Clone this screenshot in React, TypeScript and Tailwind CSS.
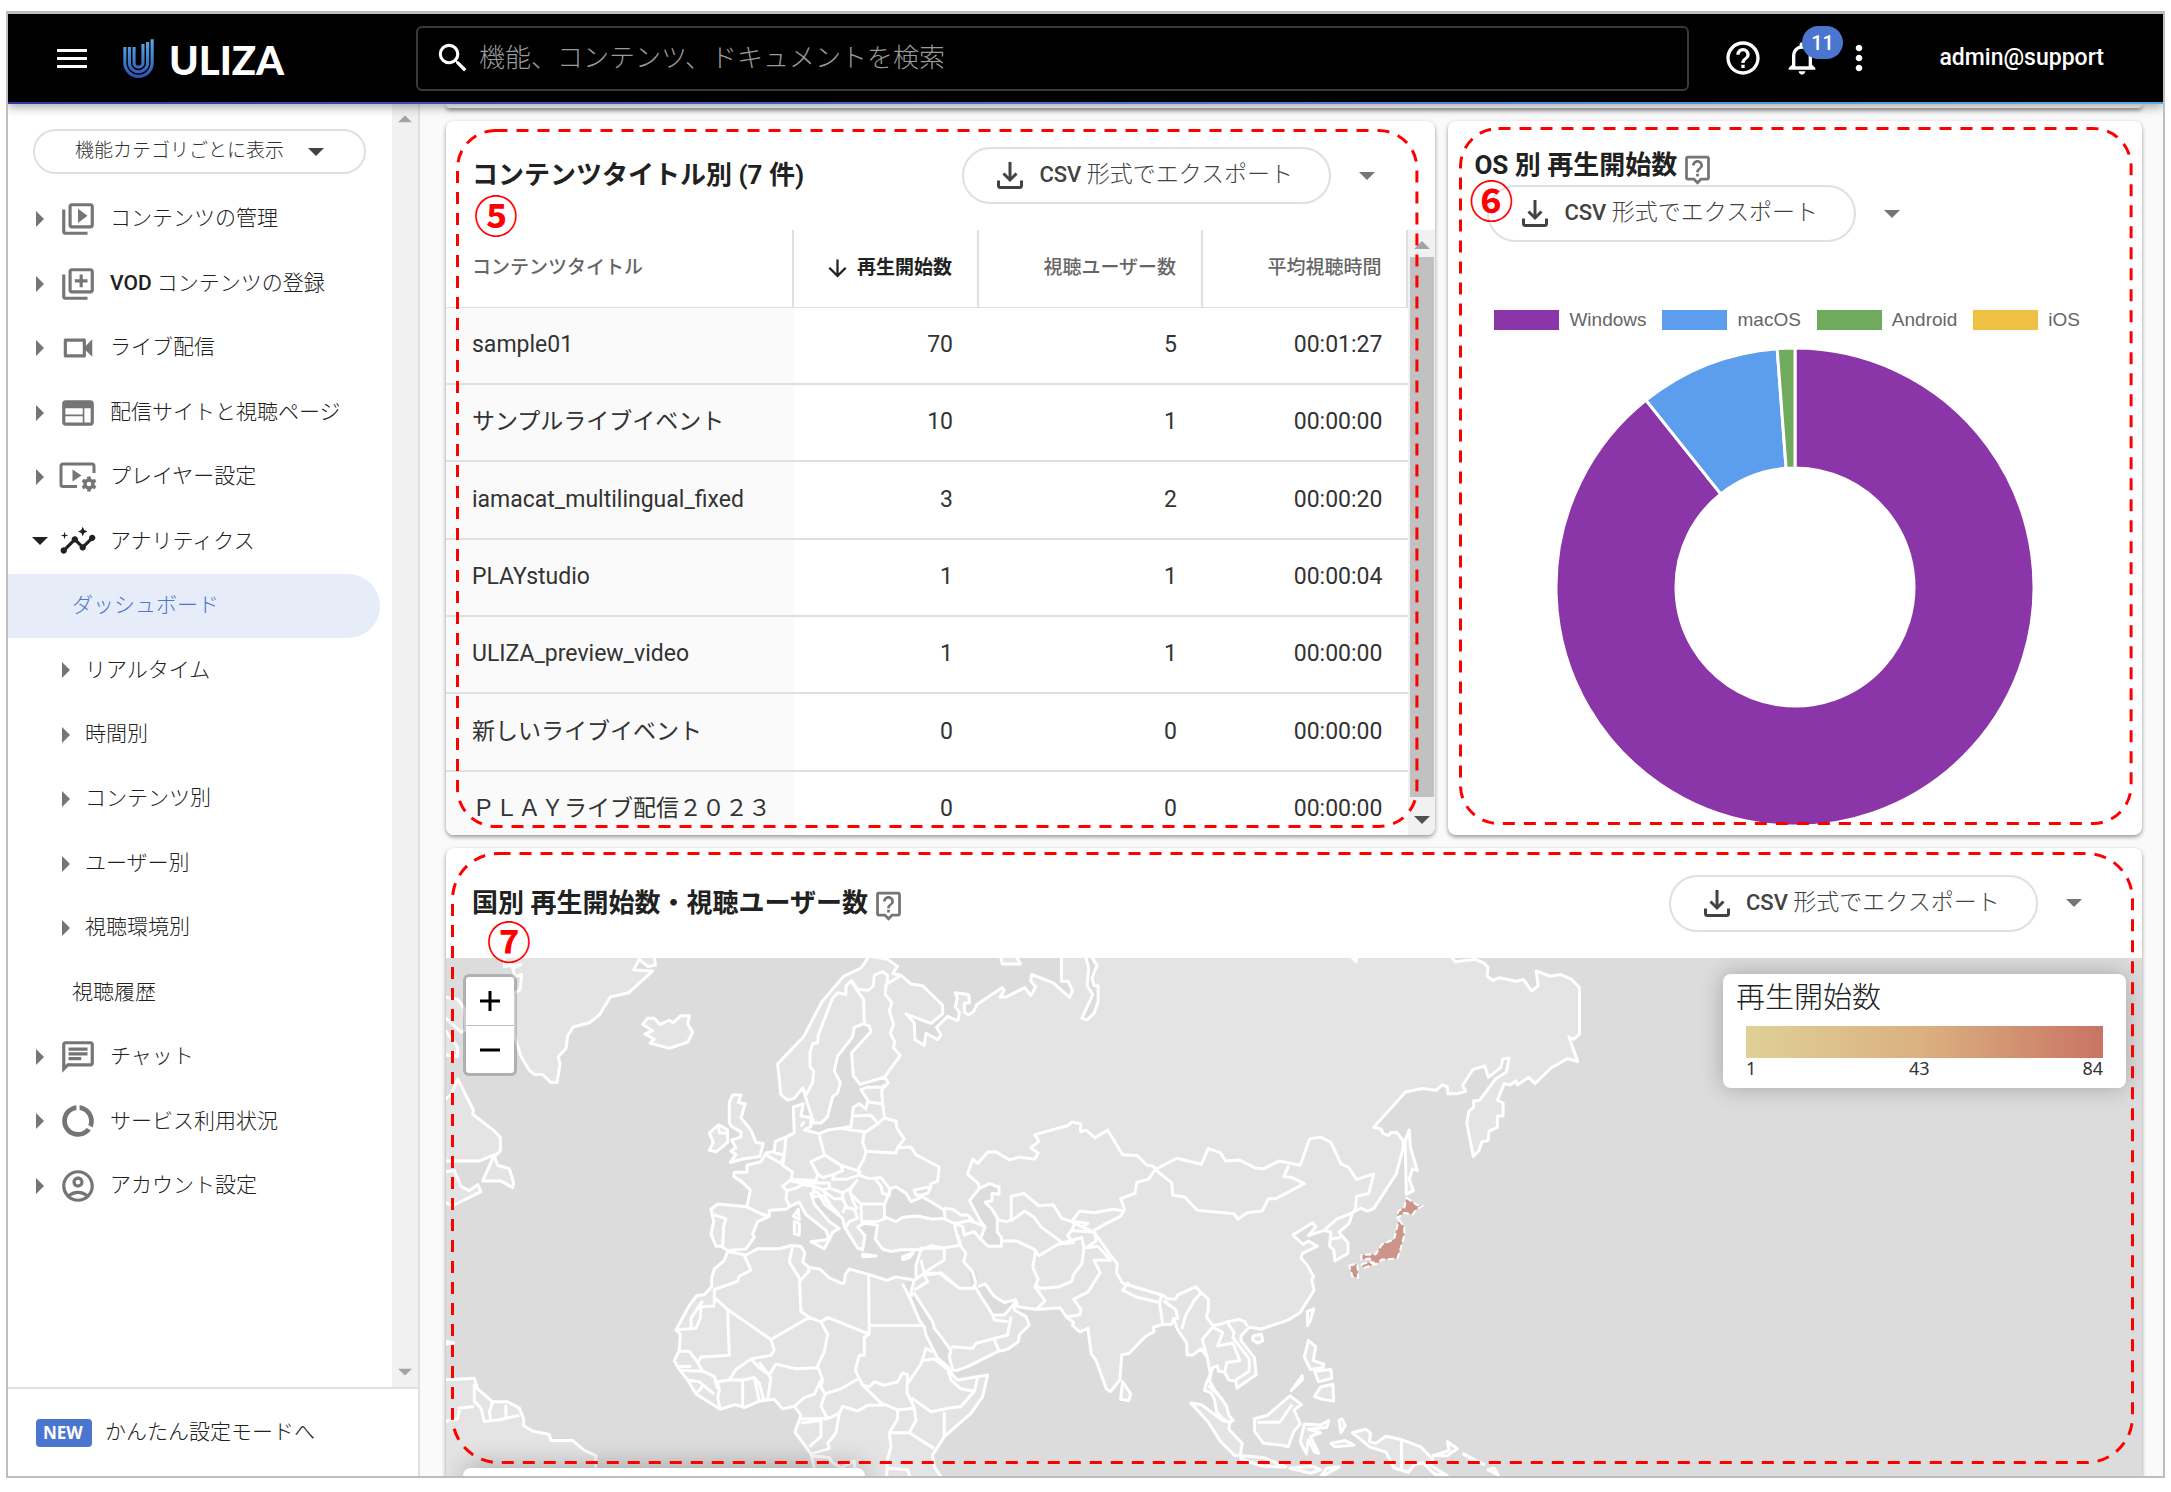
import type { ReactNode } from "react";
import {
  MdArrowDownward,
  MdDataUsage,
  MdHelpOutline,
  MdInsights,
  MdMoreVert,
  MdNotificationsNone,
  MdOutlineAccountCircle,
  MdOutlineChat,
  MdOutlineLibraryAdd,
  MdOutlineLiveHelp,
  MdOutlineVideoLibrary,
  MdOutlineVideocam,
  MdSearch,
  MdWeb,
} from "react-icons/md";

const LAND = "#e4e4e4";
const SEA = "#dcdcdc";

function PlayerSettingsIcon() {
  return (
    <svg viewBox="0 0 38 30" className="h-[30px] w-[38px]" fill="none" aria-hidden="true">
      <path d="M18 24.5H4a2 2 0 0 1-2-2V4a2 2 0 0 1 2-2h29a2 2 0 0 1 2 2v7" stroke="currentColor" strokeWidth="3" />
      <path d="M13.500 7.500v12l9-6z" fill="currentColor" />
      <circle cx="30" cy="22" r="4" stroke="currentColor" strokeWidth="3.400" />
      <g stroke="currentColor" strokeWidth="3.600">
        <path d="M30 14.500v3M30 26.500v3M23.500 18.200l2.600 1.500M33.900 24.300l2.600 1.500M23.500 25.800l2.600-1.500M33.900 19.700l2.600-1.500" />
      </g>
    </svg>
  );
}

function DownloadIcon() {
  return (
    <svg viewBox="0 0 26 27" className="h-[27px] w-[26px]" fill="none" stroke="currentColor" strokeWidth="3" aria-hidden="true">
      <path d="M13 0v17" />
      <path d="M6.500 11.500l6.500 6.500 6.500-6.500" />
      <path d="M1.500 18.500v5a2 2 0 0 0 2 2h19a2 2 0 0 0 2-2v-5" />
    </svg>
  );
}

function Triangle({ dir, className = "" }: { dir: "right" | "down" | "up"; className?: string }) {
  const shape = {
    right: { box: "0 0 8 16", d: "M0 0l8 8-8 8z", size: "h-4 w-2" },
    down: { box: "0 0 16 8", d: "M0 0h16l-8 8z", size: "h-2 w-4" },
    up: { box: "0 0 16 8", d: "M0 8h16l-8-8z", size: "h-2 w-4" },
  }[dir];
  return (
    <svg viewBox={shape.box} className={`shrink-0 ${shape.size} ${className}`} aria-hidden="true">
      <path d={shape.d} fill="currentColor" />
    </svg>
  );
}

function UlizaMark() {
  return (
    <svg viewBox="0 0 92 118" className="h-[39px] w-[31px]" fill="none" stroke="url(#uliza)" strokeWidth="9.500" aria-hidden="true">
      <defs>
        <linearGradient id="uliza" gradientUnits="userSpaceOnUse" x1="0" y1="0" x2="0" y2="118">
          <stop offset="0" stopColor="#5aaee6" />
          <stop offset="1" stopColor="#2f50b0" />
        </linearGradient>
      </defs>
      <path d="M4.750 24V71.750A41.250 41.500 0 0 0 87.250 71.750V1" />
      <path d="M18.500 24V71.750A27.500 27.500 0 0 0 73.500 71.750V9" />
      <path d="M32.500 24V71.750A13.500 13.500 0 0 0 59.500 71.750V15" />
    </svg>
  );
}

function Callout({ box, radius, mark, markAt }: { box: string; radius: number; mark: string; markAt: string }) {
  return (
    <>
      <div className={`pointer-events-none absolute z-20 ${box}`}>
        <svg className="size-full overflow-visible" fill="none" aria-hidden="true">
          <rect x="0.500" y="0.500" width="100%" height="100%" rx={radius} stroke="#ff0000" strokeWidth="3" strokeDasharray="12 9" />
        </svg>
      </div>
      <span className={`pointer-events-none absolute z-20 text-[44px] leading-[44px] font-bold text-[#ff0000] ${markAt}`}>{mark}</span>
    </>
  );
}

function ExportButton() {
  return (
    <div className="flex items-center gap-7">
      <button type="button" className="flex h-[57px] w-[369px] items-center gap-4 rounded-full border-2 border-[#e0e0e0] bg-white pl-[33px] text-[22px] font-medium whitespace-nowrap text-[#424242]">
        <DownloadIcon />
        <span>
          CSV <span className="text-[23px] font-light">形式でエクスポート</span>
        </span>
      </button>
      <button type="button" aria-label="エクスポート形式" className="text-[#757575]">
        <Triangle dir="down" />
      </button>
    </div>
  );
}

type NavItem = { label: ReactNode; icon?: ReactNode; kind: "top" | "sub" | "leaf"; open?: boolean; active?: boolean };

const NAV: NavItem[] = [
  { label: "コンテンツの管理", kind: "top", icon: <MdOutlineVideoLibrary size={38} /> },
  { label: <><span className="font-medium">VOD</span> コンテンツの登録</>, kind: "top", icon: <MdOutlineLibraryAdd size={38} /> },
  { label: "ライブ配信", kind: "top", icon: <MdOutlineVideocam size={38} /> },
  { label: "配信サイトと視聴ページ", kind: "top", icon: <MdWeb size={38} /> },
  { label: "プレイヤー設定", kind: "top", icon: <PlayerSettingsIcon /> },
  { label: "アナリティクス", kind: "top", icon: <MdInsights size={38} />, open: true },
  { label: "ダッシュボード", kind: "leaf", active: true },
  { label: "リアルタイム", kind: "sub" },
  { label: "時間別", kind: "sub" },
  { label: "コンテンツ別", kind: "sub" },
  { label: "ユーザー別", kind: "sub" },
  { label: "視聴環境別", kind: "sub" },
  { label: "視聴履歴", kind: "leaf" },
  { label: "チャット", kind: "top", icon: <MdOutlineChat size={38} /> },
  { label: "サービス利用状況", kind: "top", icon: <MdDataUsage size={38} /> },
  { label: "アカウント設定", kind: "top", icon: <MdOutlineAccountCircle size={38} /> },
];

function NavRow({ item }: { item: NavItem }) {
  if (item.kind === "leaf") {
    return (
      <a
        href="#"
        aria-current={item.active ? "page" : undefined}
        className={`flex w-[372px] items-center rounded-r-full pl-16 ${item.active ? "bg-[#e6ecf8] text-[#4a76cf]" : "text-[#212121]"}`}
      >
        {item.label}
      </a>
    );
  }
  if (item.kind === "sub") {
    return (
      <button type="button" className="flex items-center gap-[15px] pl-[54px] text-[#212121]">
        <Triangle dir="right" className="text-[#757575]" />
        {item.label}
      </button>
    );
  }
  return (
    <button type="button" className="flex items-center pl-6 whitespace-nowrap text-[#212121]">
      <span className={`flex w-4 justify-center ${item.open ? "text-[#212121]" : "text-[#757575]"}`}>
        <Triangle dir={item.open ? "down" : "right"} />
      </span>
      <span className={`ml-[11px] flex w-[38px] shrink-0 justify-center ${item.open ? "text-[#212121]" : "text-[#757575]"}`}>{item.icon}</span>
      <span className="ml-[13px]">{item.label}</span>
    </button>
  );
}

function Header() {
  return (
    <header className="relative z-30 shrink-0 bg-linear-to-r from-[#3533a8] via-[#4a6fd0] to-[#5aaee0] pb-[2px] shadow-[0_3px_10px_rgba(0,0,0,0.35)]">
      <div className="flex h-[88px] items-center bg-black text-white">
        <button type="button" aria-label="メニュー" className="ml-[49px] flex w-[30px] flex-col gap-[5px]">
          <span className="h-[3px] bg-white" />
          <span className="h-[3px] bg-white" />
          <span className="h-[3px] bg-white" />
        </button>
        <a href="#" className="ml-9 flex w-[293px] items-center gap-[15px]">
          <UlizaMark />
          <span className="pt-1 font-['Lato'] text-[40px] leading-10 font-black">ULIZA</span>
        </a>
        <label className="flex h-[65px] w-[1273px] items-center gap-[7px] rounded-md border-2 border-[#3a3a3a] pl-4">
          <MdSearch size={38} className="shrink-0" />
          <input
            type="search"
            aria-label="検索"
            placeholder="機能、コンテンツ、ドキュメントを検索"
            className="w-full bg-transparent text-[26px] font-light outline-none placeholder:text-[#9a9a9a]"
          />
        </label>
        <button type="button" aria-label="ヘルプ" className="ml-[34px]">
          <MdHelpOutline size={40} />
        </button>
        <button type="button" aria-label="通知 11件" className="relative ml-[19px]">
          <MdNotificationsNone size={40} />
          <span className="absolute -top-3 left-5 flex h-[33px] w-[41px] items-center justify-center rounded-full bg-[#4a76cf] text-[20px] font-medium">11</span>
        </button>
        <button type="button" aria-label="その他" className="ml-[17px]">
          <MdMoreVert size={40} />
        </button>
        <button type="button" className="mr-[59px] ml-auto text-[23px] font-medium">admin@support</button>
      </div>
    </header>
  );
}

function Sidebar() {
  return (
    <aside className="flex w-[412px] shrink-0 flex-col border-r-2 border-[#e0e0e0] bg-white">
      <div className="flex min-h-0 flex-1">
        <div className="flex-1">
          <div className="relative mt-[25px] ml-[25px] h-[45px] w-[333px]">
            <select aria-label="表示方法" className="size-full appearance-none rounded-full border-2 border-[#e0e0e0] bg-white pl-10 text-[19px] font-light text-[#303030]">
              <option>機能カテゴリごとに表示</option>
            </select>
            <Triangle dir="down" className="absolute top-[19px] right-[42px] text-[#424242]" />
          </div>
          <nav className="mt-[13px] grid h-[1031px] grid-rows-16 text-[21px] font-light">
            {NAV.map((item, i) => (
              <NavRow key={i} item={item} />
            ))}
          </nav>
        </div>
        <div className="flex w-[26px] flex-col items-center justify-between bg-[#f1f1f1] py-[11px] text-[#a3a3a3]">
          <Triangle dir="up" className="scale-90" />
          <Triangle dir="down" className="scale-90" />
        </div>
      </div>
      <div className="flex h-[89px] items-center gap-[13px] border-t-2 border-[#e0e0e0] pl-7 text-[21px] font-light text-[#212121]">
        <span className="flex h-7 w-14 items-center rounded-sm bg-[#4a76cf] pl-[7px] font-['Noto_Sans'] text-[17px] font-bold text-white">NEW</span>
        <a href="#">かんたん設定モードへ</a>
      </div>
    </aside>
  );
}

const ROWS: [string, string, string, string][] = [
  ["sample01", "70", "5", "00:01:27"],
  ["サンプルライブイベント", "10", "1", "00:00:00"],
  ["iamacat_multilingual_fixed", "3", "2", "00:00:20"],
  ["PLAYstudio", "1", "1", "00:00:04"],
  ["ULIZA_preview_video", "1", "1", "00:00:00"],
  ["新しいライブイベント", "0", "0", "00:00:00"],
  ["ＰＬＡＹライブ配信２０２３", "0", "0", "00:00:00"],
];

function ContentCard() {
  return (
    <section className="relative flex h-[714px] flex-col rounded-lg bg-white shadow-[0_2px_4px_rgba(0,0,0,0.4)]">
      <div className="flex h-[109px] shrink-0 items-center justify-between pr-[60px] pl-[26px]">
        <h2 className="text-[26px] font-bold text-[#212121]">コンテンツタイトル別 (7 件)</h2>
        <ExportButton />
      </div>
      <div className="flex min-h-0 flex-1 overflow-hidden rounded-b-lg">
        <div className="min-w-0 flex-1 overflow-hidden">
          <table className="w-full table-fixed border-separate border-spacing-0 text-[23px] text-[#333333]">
            <colgroup>
              <col className="w-[348px]" />
              <col className="w-[185px]" />
              <col className="w-[224px]" />
              <col />
            </colgroup>
            <thead>
              <tr className="h-[78px] text-[19px] text-[#666666] [&>th]:border-r-2 [&>th]:border-b [&>th]:border-[#e0e0e0]">
                <th className="pl-[26px] text-left font-medium">コンテンツタイトル</th>
                <th className="pr-[25px] text-[#212121]">
                  <span className="flex items-center justify-end gap-[6px]">
                    <MdArrowDownward size={27} />
                    再生開始数
                  </span>
                </th>
                <th className="pr-[25px] text-right font-medium">視聴ユーザー数</th>
                <th className="pr-[25px] text-right font-medium">平均視聴時間</th>
              </tr>
            </thead>
            <tbody>
              {ROWS.map(([title, plays, users, time]) => (
                <tr key={title} className="h-[77px] text-right nth-[3n]:h-[78px] [&>td]:border-b-2 [&>td]:border-[#e0e0e0]">
                  <td className="bg-[#fafafa] pl-[26px] text-left whitespace-nowrap">{title}</td>
                  <td className="pr-[26px]">{plays}</td>
                  <td className="pr-[26px]">{users}</td>
                  <td className="pr-[26px]">{time}</td>
                </tr>
              ))}
            </tbody>
          </table>
        </div>
        <div className="flex w-[27px] flex-col items-center bg-[#f1f1f1] pt-[11px] pb-[11px]">
          <Triangle dir="up" className="text-[#a3a3a3]" />
          <div className="mt-2 mb-[19px] w-6 flex-1 bg-[#c1c1c1]" />
          <Triangle dir="down" className="text-[#505050]" />
        </div>
      </div>
      <Callout box="top-[9px] right-[19px] bottom-[9px] left-[11px]" radius={38} mark="⑤" markAt="top-[75px] left-7" />
    </section>
  );
}

const LEGEND = [
  { label: "Windows", swatch: "bg-[#8a36a8]" },
  { label: "macOS", swatch: "bg-[#5c9eed]" },
  { label: "Android", swatch: "bg-[#70aa5c]" },
  { label: "iOS", swatch: "bg-[#eec144]" },
];

const SLICES = [
  { value: 75, color: "#8a36a8" },
  { value: 8, color: "#5c9eed" },
  { value: 1, color: "#70aa5c" },
];

function Donut() {
  const total = SLICES.reduce((sum, s) => sum + s.value, 0);
  const at = (turn: number, r: number) => `${237 + r * Math.sin(turn * 2 * Math.PI)} ${237 - r * Math.cos(turn * 2 * Math.PI)}`;
  let start = 0;
  return (
    <svg viewBox="0 0 474 474" className="mx-auto mt-5 size-[474px] overflow-visible" role="img" aria-label="OS 別 再生開始数">
      {SLICES.map((s) => {
        const from = start;
        const to = start + s.value / total;
        start = to;
        const large = to - from > 0.5 ? 1 : 0;
        return (
          <path
            key={s.color}
            d={`M${at(from, 239)}A239 239 0 ${large} 1 ${at(to, 239)}L${at(to, 119)}A119 119 0 ${large} 0 ${at(from, 119)}Z`}
            fill={s.color}
            stroke="#ffffff"
            strokeWidth="3"
          />
        );
      })}
    </svg>
  );
}

function OsCard() {
  return (
    <section className="relative flex h-[714px] flex-col rounded-lg bg-white shadow-[0_2px_4px_rgba(0,0,0,0.4)]">
      <div className="mt-7 flex h-8 items-center gap-1 pl-[26px]">
        <h2 className="text-[26px] leading-8 font-bold whitespace-nowrap text-[#212121]">OS 別 再生開始数</h2>
        <MdOutlineLiveHelp size={33} className="mt-2 text-[#757575]" />
      </div>
      <div className="mt-1 pl-[39px]">
        <ExportButton />
      </div>
      <ul className="mt-[68px] flex h-5 items-center gap-4 pl-[46px] font-['Liberation_Sans'] text-[19px] text-[#666666]">
        {LEGEND.map((l) => (
          <li key={l.label} className="flex items-center gap-[10px]">
            <span className={`h-5 w-[65px] ${l.swatch}`} />
            {l.label}
          </li>
        ))}
      </ul>
      <Donut />
      <Callout box="top-[7px] right-[11px] bottom-3 left-3" radius={38} mark="⑥" markAt="top-[60px] left-[21px]" />
    </section>
  );
}

/* Coastlines and borders, grouped by the three sheets they were digitised on. */
const WEST_COASTS = [
  "M190 40L190 75 240 70 215 80 222 105 242 98 237 142 220 150 220 270 240 330 265 370 280 382 305 382 330 405 348 405 357 352 352 332 375 308 380 272 397 247 445 235 475 213 508 162 563 150 635 88 578 85 595 55 620 75 643 72 640 40z",
  "M605 240L620 222 640 222 657 240 685 228 697 235 720 215 745 215 740 238 755 262 740 290 685 308 627 293 640 282 612 267 635 258z",
  "M1590 1015L1560 995 1500 945 1440 960 1425 955 1425 925 1440 880 1380 880 1350 885 1325 878 1303 850 1310 810 1270 805 1250 815 1272 840 1265 880 1250 875 1210 815 1205 790 1150 750 1130 715 1110 720 1120 750 1165 800 1195 820 1175 830 1165 850 1155 825 1095 780 1075 745 1050 755 1035 765 985 768 985 785 950 800 935 835 940 845 915 878 860 882 840 870 825 870 810 835 818 800 810 765 830 750 918 758 928 710 900 685 878 672 880 660 918 660 918 640 960 630 975 605 1000 600 1003 572 1035 560 1060 548 1057 475 1087 465 1080 500 1110 505 1110 530 1090 540 1135 550 1160 540 1200 535 1230 530 1237 475 1255 465 1275 480 1280 455 1260 425 1280 418 1330 418 1342 405 1330 390 1257 410 1237 385 1232 320 1290 260 1285 245 1268 238 1240 248 1235 275 1190 330 1180 372 1198 405 1190 435 1175 445 1160 502 1140 520 1118 520 1085 420 1060 450 1040 455 1020 440 1010 352 1088 275 1143 175 1208 103 1260 80 1285 45 1340 55 1370 75 1355 95 1380 100 1410 125 1445 130 1505 185 1505 210 1470 237 1395 210 1420 235 1422 283 1450 300 1455 265 1490 283 1500 270 1487 248 1520 217 1552 230",
  "M1415 965L1365 957 1338 967 1283 950 1225 935 1213 950 1210 975 1200 975 1165 960 1137 935 1105 930 1085 915 1092 890 1080 870 1050 868 1015 877 950 877 915 895 860 885 850 910 820 935 812 960 812 985 790 1008 768 1010 745 1038 705 1108 718 1120 715 1165 700 1195 715 1220 740 1250 765 1290 838 1333 882 1320 912 1328 955 1310 1000 1305 1025 1332 1060 1325 1080 1350 1062 1398 1110 1460 1120 1500 1140 1600 1500 1600 1500 1525 1480 1496 1475 1463 1510 1411 1590 1345 1625 1297 1640 1236 1550 1250 1535 1236 1520 1212 1490 1188 1455 1122 1450 1099 1435 1080 1412 1027 1385 977M1410 1013L1425 985 1415 965",
  "M875 440L900 440 892 462 913 465 900 505 930 540 945 575 967 578 957 615 905 622 868 632 885 610 870 600 885 590 872 568 900 560 900 545 872 530 865 520 865 462z",
  "M833 525L860 540 860 575 825 602 805 597 817 575 805 548z",
  "M1110 857L1165 850 1150 877z",
  "M1060 800L1075 805 1075 838 1060 835z",
  "M1072 765L1075 795 1057 785z",
  "M1265 892L1305 898 1265 900z",
  "M1385 900L1417 888 1405 903 1385 908z",
  "M0 160L50 168 70 195 75 255 60 262 0 210",
  "M0 240L50 305 50 330 0 325",
  "M0 460L30 440 50 395 97 483 95 495 157 540 178 560 178 600 160 615 170 640 205 650 218 690 215 703 180 685 125 685 160 610 115 628 0 628",
  "M0 660L40 655 60 700 85 712 110 695 120 715 35 755 0 740",
  "M0 1250L100 1245 110 1275 155 1312 200 1312 235 1330 248 1360 248 1380 275 1395 325 1405 330 1422 395 1422 430 1450 465 1465 460 1600 0 1600",
  "M0 1138L38 1145 0 1150z",
];

const WEST_BORDERS =
  "M1085 420L1095 440 1115 405 1118 372 1107 360 1107 320 1115 295 1130 292 1132 270 1175 165 1190 150 1215 155 1215 130 1232 115 1250 140 1282 143 1297 130 1300 100 1325 90 1340 100 1338 125 1380 100M1232 120L1268 170 1270 238M1335 125L1333 155 1353 178 1345 200 1358 240 1348 265 1362 290 1357 305 1378 328 1330 390M1330 410L1322 430 1325 465 1280 460M1325 465L1330 500M1235 500L1290 498 1310 520M1200 535L1230 540 1275 545 1310 522 1330 505 1365 515 1368 535 1390 565 1370 590 1365 605 1275 600 1265 575 1270 545M1370 590L1410 588 1425 610 1495 645 1490 685 1465 695M1135 555L1150 610 1200 640 1250 655 1270 620 1275 600M1035 560L1030 610 1025 640 1055 660 1050 680 1125 683 1130 665 1110 630 1150 612M975 610L1020 635 1030 612M1000 605L1030 610M1048 682L1025 700 1038 712 1035 735 1045 755M1050 685L1070 688 1085 695 1065 705 1040 712M1070 690L1165 690 1165 705 1145 710 1120 700 1085 695M1130 665L1145 675 1180 665 1205 655 1200 640M1180 668L1175 680 1215 680 1255 668 1258 655M1165 705L1205 718 1230 705 1250 680M1230 705L1228 720 1260 750 1335 750M1250 655L1255 668 1285 678 1320 675 1345 705 1345 725 1325 720 1320 700 1300 675M1120 700L1115 730 1150 725 1165 745 1150 735 1195 780M1145 712L1180 735 1205 735 1205 718M1205 735L1215 755 1205 775M1228 720L1240 750 1250 765M1260 750L1262 800 1310 800 1335 790M1215 760L1240 765 1250 790 1225 800 1215 815M818 780L855 792 848 815 845 870M918 758L965 780 985 785M1440 880L1470 868 1505 875 1555 868M833 530L835 548 858 548M1090 515L1080 530M910 895L930 938 895 955 890 970 820 993 820 1035M822 1040L780 1042 778 1075 765 1103 705 1108M785 1025L750 1075 750 1100M820 1015L860 1050 865 1180 780 1185 770 1200 745 1168 715 1168M860 1050L990 1135 1105 1072 1080 1055 1075 960 1045 915 1055 868M1075 970L1105 940 1100 925M1283 950L1285 1120 1160 1072 1140 1085 1105 1072M1285 1095L1447 1095M1285 1120L1270 1128 1270 1180 1255 1180 1243 1222 1265 1265 1320 1315 1370 1335 1370 1360 1345 1400 1350 1440 1340 1475 1335 1560M1140 1085L1160 1120 1150 1170 1130 1210 1145 1250 1140 1270 1155 1295M1130 1215L1065 1218 1005 1205 985 1235M990 1135L1000 1165 990 1180 930 1190 885 1220 865 1250 830 1255 835 1280 830 1300 838 1333M770 1200L785 1225 820 1240 830 1275M785 1225L715 1222M712 1212L750 1212M740 1250L775 1255 800 1275 820 1290M765 1290L790 1262M865 1250L905 1250 905 1325M905 1250L940 1243 955 1310M940 1243L955 1260 968 1305M955 1200L990 1245 980 1305M930 1190L955 1215 985 1235M1060 1325L1090 1300 1120 1290 1140 1250M1150 1295L1140 1325 1160 1360 1080 1360M1150 1290L1200 1275 1255 1245M1160 1360L1195 1345 1205 1325 1250 1338 1280 1322 1330 1322M1080 1372L1140 1365 1140 1410 1105 1440M1195 1345L1185 1400 1160 1430 1165 1445 1110 1460M1370 1335L1420 1330 1425 1365 1405 1400 1350 1400M1405 1400L1480 1445M1410 1300L1470 1340 1520 1330M1510 1340L1510 1411M1265 1265L1285 1270 1300 1255 1330 1265 1370 1255 1385 1230 1400 1235 1398 1285 1420 1330M1400 1260L1440 1205 1455 1160 1475 1170M1440 1195L1480 1190 1520 1220 1530 1250 1560 1275 1600 1282 1560 1325 1520 1330M1600 1282L1610 1245M1110 1465L1165 1470 1175 1485 1200 1500 1240 1480 1245 1560M1335 1500L1400 1505 1420 1560M100 1260L100 1310 120 1330 130 1368 180 1362 235 1350M155 1312L145 1340 150 1365M195 1320L195 1355M50 1330L100 1325M0 1370L50 1360 55 1335";

const EAST_COASTS = [
  "M42 230L45 205 35 190 40 165 35 150 68 155 70 178 57 180 58 205 67 213 80 203 88 183 150 135 155 143 145 162 160 162 205 135 220 158 232 133 220 117 222 98 275 122 315 163 322 145 312 117 295 117 295 0 355 0 355 50 362 80 358 130 372 155 345 222 358 227 375 208 385 175 385 130 375 130 370 108 382 72 370 50 370 0 1252 0 1252 50 1260 62 1310 55 1330 65 1340 78 1338 103 1352 115 1368 107 1408 117 1427 112 1447 145 1463 130 1458 88 1493 103 1518 98 1545 112 1564 135 1564 268 1550 282 1538 275 1560 345 1535 337 1495 363 1455 408 1440 390 1412 412 1408 400 1395 412 1380 408 1363 455 1377 463 1377 500 1363 500 1363 533 1343 542 1340 570 1325 573 1318 598 1304 615 1288 520 1293 487 1305 475 1305 457 1320 455 1358 395 1385 375 1392 335 1376 338 1372 362 1341 390 1332 358 1303 368 1278 413 1285 430 1263 437 1242 437 1240 417 1227 412 1214 427 1178 422 1138 432 1060 532 1078 537 1083 550 1097 555 1102 547 1117 547 1132 570 1132 592 1115 665 1060 763 1045 770 1028 762 1008 775 1000 805 975 830 997 860 997 890 965 912 962 880 952 870 955 830 938 825 900 840 918 815 910 803 862 838 887 865 900 855 922 870 885 890 882 903 898 925 913 957 908 965 914 995 880 1058 850 1080 785 1105 755 1100 735 1125 735 1138 768 1187 772 1235 725 1273 722 1253 705 1250 695 1228 680 1225 677 1210 665 1215 658 1252 668 1275 685 1300 700 1325 705 1350 716 1365 708 1370 690 1360 675 1340 670 1305 660 1285 646 1280 648 1265 660 1232 652 1185 637 1162 615 1180 603 1178 602 1145 580 1108 570 1075 565 1092 543 1092 520 1100 522 1113 500 1127 460 1175 443 1178 438 1250 415 1283 405 1275 380 1195 368 1175 360 1103 340 1113 322 1095 325 1087 308 1072 292 1045 235 1050 188 1042 183 1022 155 1030 130 1012 108 977 90 985",
  "M1147 540L1150 590 1167 655 1155 650 1147 680 1157 712 1140 722 1137 570z",
  "M898 1055L913 1048 905 1080 898 1095z",
  "M765 1125L785 1120 788 1138 775 1145 763 1135z",
  "M445 1255L465 1290 460 1308 440 1305z",
  "M612 1315L638 1320 690 1365 708 1370 705 1390 738 1430 733 1465 720 1465 685 1425 655 1370z",
  "M735 1465L790 1470 845 1497 790 1495 735 1475z",
  "M855 1295L883 1320 865 1335 880 1375 865 1395 850 1440 835 1435 790 1430 768 1395 768 1360 800 1350z",
  "M885 1400L890 1375 930 1378 950 1365 945 1385 900 1390 930 1400 905 1410 925 1458 915 1455 900 1420 895 1460 880 1425z",
  "M900 1138L918 1155 912 1195 938 1205 935 1215 905 1220 890 1185z",
  "M915 1225L955 1220 958 1245 925 1255z",
  "M960 1262L962 1310 935 1305 915 1297 930 1270z",
  "M885 1238L885 1250 858 1280z",
  "M1008 1400L1040 1390 1052 1400 1050 1425 1065 1430 1090 1410 1130 1420 1175 1440 1205 1475 1190 1485 1240 1522 1210 1518 1180 1485 1160 1490 1145 1512 1110 1500 1090 1455 1050 1440 1035 1425z",
  "M1240 1425L1265 1445 1240 1465 1205 1465 1245 1450z",
  "M1280 1460L1300 1475 1330 1490z",
  "M1340 1505L1355 1500 1365 1520z",
  "M975 1365L982 1360 990 1380 980 1400z",
  "M955 1430L990 1422 1012 1435 965 1440z",
  "M855 1500L910 1495 930 1505 905 1515z",
  "M975 1497L940 1520 930 1525 945 1500z",
  "M145 40L150 68 195 68 180 40z",
  "M1000 40L1017 62 1020 40z",
];

const CASPIAN = "M135 700L120 692 95 705 70 740 95 795 108 815 97 848 115 870 148 870 148 845 138 830 138 790 125 765 108 745 125 740 125 720 142 722 142 700z";

const EAST_BORDERS =
  "M95 705L90 690 65 665 78 622 90 635 115 602 135 602 168 625 190 617 230 622 238 605 220 590 240 572 230 553 312 527 320 517 342 522 342 545 355 540 378 562 408 540 445 610 480 612 505 640 520 642 525 652 578 620 638 637 655 592 685 605 697 628 732 625 770 648 790 650 828 628 880 640 903 565 930 560 955 575 980 637 998 645 1018 680 1060 665 1048 720 1018 728 1015 765 1008 775 970 792 938 825M525 652L565 690 568 725 597 730 628 768 718 778 727 793 750 775 787 770 802 735 820 735 890 692 860 675 840 672 852 640M525 652L508 680 480 688 475 720 440 735 450 765 440 785 405 805 375 825M138 795L160 800 172 795 172 728 203 720 240 755 275 752 295 790 320 800 340 770 375 775 420 765 450 770M172 798L205 770 230 790 245 815 300 862 285 865 240 897 230 880 185 855 150 855M320 800L345 815 375 830 320 825 330 800 360 805 345 815M300 862L325 860 310 840 320 825M375 830L380 855 355 875M285 865L345 845 350 875 385 870M350 875L345 920 325 950 320 970 290 985 245 990 230 980M232 880L225 930 238 965 230 985 255 1025 235 1048M385 870L415 910 375 910 390 945 360 1000 325 1020 343 1050 340 1065 308 1070M375 830L415 895 432 920 430 945 445 975 545 1010 555 1020 575 1020 580 1008 625 985 637 1002 655 1020 655 1050 650 1070 665 1095 690 1090 700 1085 730 1078 745 1085 750 1098M460 972L445 995 480 1015 535 1030 540 1012M535 1030L540 1065 543 1092M545 1025L575 1050 580 1075 568 1075M637 1002L620 1025 600 1065 590 1105M665 1100L640 1135 652 1185M665 1100L690 1115 678 1153 715 1145 732 1195 700 1200 695 1228M700 1085L718 1115 715 1130 755 1190 755 1225 722 1250M655 1265L690 1305M952 850L980 845M775 1370L830 1370 860 1320M1128 1420L1128 1505";

const JAPAN =
  "M1140 732L1165 752 1180 755 1165 765 1155 780 1135 775 1118 790 1120 770 1135 760zM1122 795L1135 815 1135 840 1125 880 1118 905 1080 908 1065 922 1050 905 1030 908 1030 895 1065 893 1080 865 1110 850 1115 825zM1000 925L1020 920 1022 960 1008 957zM1030 922L1050 914 1060 922 1035 932z";

const ARABIA =
  "M400 600L388 645 400 640 455 725 460 745 480 770 510 812 505 830 515 870 525 872 560 860 650 815 680 808 712 785 715 765 745 735 735 710 700 690 705 665 670 705 635 705 620 680 600 650 585 625 535 625 475 580 430 580z";

const MIDDLE_SEAS = [
  "M310 410L310 375 330 325 345 320 375 340 390 365 425 350 490 390 492 415 455 418 410 408 365 412 345 425z",
  "M400 330L450 320 440 340 420 345 405 345z",
];

const MIDDLE_BORDERS =
  "M492 418L520 430 525 455 535 490M415 505L490 505 490 540 450 565 430 580 420 540M400 630L440 605 430 585 480 580M530 465L540 500 555 520 548 545 575 575 585 610M575 625L585 610M490 385L515 388 540 405 560 405 575 420 550 425 520 430 545 440 550 465 580 455 600 480M560 420L590 430 610 440M510 800L575 805 585 790 680 765 690 710M640 780L655 815M635 705L640 720 680 725";

function WorldMap() {
  const west = "translate(-5 -18) scale(.3333 .352)";
  const east = "translate(495 -18) scale(.4082 .352)";
  const middle = "translate(335 122) scale(.3333)";
  return (
    <svg
      className="absolute top-0 left-0 h-[540px] w-[1697px] [&_path]:[vector-effect:non-scaling-stroke]"
      viewBox="0 0 1697 540"
      fill={LAND}
      stroke="#ffffff"
      strokeWidth="3"
      strokeLinejoin="round"
      role="img"
      aria-label="国別の再生開始数の地図"
    >
      <g transform={west}>
        {WEST_COASTS.map((d) => (
          <path key={d} d={d} />
        ))}
      </g>
      <g transform={east}>
        {EAST_COASTS.map((d) => (
          <path key={d} d={d} />
        ))}
        <path d="M32 250V940H110V250z" stroke="none" />
      </g>
      <g transform={middle}>
        <path d={ARABIA} />
        {MIDDLE_SEAS.map((d) => (
          <path key={d} d={d} fill={SEA} />
        ))}
      </g>
      <g transform={east}>
        <path d={CASPIAN} fill={SEA} />
        <path d={JAPAN} fill="#cd9488" strokeDasharray="6 3" strokeWidth="2" />
      </g>
      <g fill="none">
        <path transform={west} d={WEST_BORDERS} />
        <path transform={east} d={EAST_BORDERS} />
        <path transform={middle} d={MIDDLE_BORDERS} />
      </g>
    </svg>
  );
}

function CountryCard() {
  return (
    <section className="relative flex min-h-0 flex-1 flex-col rounded-t-lg bg-white shadow-[0_2px_4px_rgba(0,0,0,0.4)]">
      <div className="flex h-[110px] shrink-0 items-center justify-between pr-[60px] pl-[26px]">
        <div className="flex items-center gap-1">
          <h2 className="text-[26px] font-bold text-[#212121]">国別 再生開始数・視聴ユーザー数</h2>
          <MdOutlineLiveHelp size={33} className="mt-1 text-[#757575]" />
        </div>
        <ExportButton />
      </div>
      <div className="relative flex-1 overflow-hidden bg-[#dcdcdc]">
        <WorldMap />
        <div className="absolute top-4 left-[17px] flex w-[54px] flex-col rounded-md border-[3px] border-black/20 bg-white bg-clip-padding text-[#000000]">
          {[
            { label: "拡大", d: "M0 10h20M10 0v20" },
            { label: "縮小", d: "M0 10h20" },
          ].map((z, i) => (
            <button key={z.label} type="button" aria-label={z.label} className={`flex h-12 items-center justify-center ${i ? "border-t border-[#c0c0c0]" : ""}`}>
              <svg viewBox="0 0 20 20" className="size-5" stroke="currentColor" strokeWidth="3" aria-hidden="true">
                <path d={z.d} />
              </svg>
            </button>
          ))}
        </div>
        <div className="absolute top-4 right-4 w-[403px] rounded-lg bg-white px-[13px] pt-1 pb-[10px] shadow-[0_0_22px_rgba(0,0,0,0.25)]">
          <h3 className="text-[29px] leading-10 font-light text-[#212121]">再生開始数</h3>
          <div className="mx-[10px] mt-2 h-8 bg-linear-to-r from-[#e0d098] via-[#dab080] to-[#c87464]" />
          <div className="mx-[10px] flex justify-between font-['Noto_Sans'] text-[18px] leading-5 text-[#333333]">
            <span>1</span>
            <span>43</span>
            <span>84</span>
          </div>
        </div>
        <div className="absolute -bottom-2 left-[17px] h-4 w-[402px] rounded-lg bg-white shadow-[0_0_26px_rgba(0,0,0,0.35)]" />
      </div>
      <Callout box="top-[5px] right-[10px] bottom-[14px] left-[6px]" radius={46} mark="⑦" markAt="top-[74px] left-[41px]" />
    </section>
  );
}

export default function App() {
  return (
    <div className="flex h-screen bg-white pt-[11px] pr-[6px] pb-[14px] pl-[6px] font-[Roboto,'Noto_Sans_CJK_JP',sans-serif]">
      <div className="flex min-w-0 flex-1 flex-col overflow-hidden border-2 border-t-[3px] border-[#bdbdbd]">
        <Header />
        <div className="flex min-h-0 flex-1">
          <Sidebar />
          <main className="flex min-w-0 flex-1 flex-col gap-[13px] bg-[#fafafa] pr-[21px] pl-[26px]">
            <div className="h-1 shrink-0 rounded-b-lg bg-white shadow-[0_2px_4px_rgba(0,0,0,0.5)]" />
            <div className="grid shrink-0 grid-cols-[990fr_694fr] gap-[13px]">
              <ContentCard />
              <OsCard />
            </div>
            <CountryCard />
          </main>
        </div>
      </div>
    </div>
  );
}
